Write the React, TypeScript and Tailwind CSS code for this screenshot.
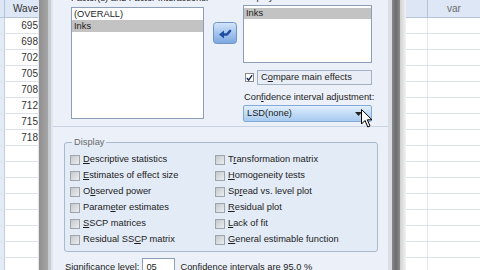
import React from 'react';

// mnemonic label: underline one character, like a Windows dialog
const Mn = ({ text, at }: { text: string; at: number }) => (
  <span className="whitespace-nowrap">
    {text.slice(0, at)}
    <span className="underline underline-offset-[1px]">{text.charAt(at)}</span>
    {text.slice(at + 1)}
  </span>
);

const Box = () => (
  <span className="w-[10px] h-[10px] shrink-0 border border-[#9ea4ab] bg-[linear-gradient(135deg,#c4c8cd,#eceef0)]" />
);

const leftRows = ['695', '698', '702', '705', '708', '712', '715', '718', '', '', '', '', '', '', '', ''];

const leftItems: [string, number][] = [
  ['Descriptive statistics', 0],
  ['Estimates of effect size', 0],
  ['Observed power', 1],
  ['Parameter estimates', 5],
  ['SSCP matrices', 0],
  ['Residual SSCP matrix', 11],
];
const rightItems: [string, number][] = [
  ['Transformation matrix', 1],
  ['Homogeneity tests', 0],
  ['Spread vs. level plot', 2],
  ['Residual plot', 0],
  ['Lack of fit', 0],
  ['General estimable function', 0],
];

export default function App() {
  return (
    <div className="relative w-[480px] h-[270px] overflow-hidden flex bg-white font-['Liberation_Sans',Arial,sans-serif] text-[9.3px] text-[#1c1c1c]">
      {/* data sheet on the left */}
      <div className="w-[38px] shrink-0 flex flex-col text-[10px] text-[#333]">
        <div className="h-[18px] shrink-0 flex border-b border-[#b4c3d8]">
          <div className="w-[5px] bg-[#dce6f4] border-r border-[#b4c3d8]" />
          <div className="flex-1 bg-[#dde7f5] pl-[8px] leading-[18px] overflow-hidden whitespace-nowrap">Wave</div>
        </div>
        {leftRows.map((v, i) => (
          <div key={i} className="h-[16px] shrink-0 flex border-b border-[#dde3ec]">
            <div className="w-[5px] bg-[#e3ebf6] border-r border-[#c4d0e0]" />
            <div className="flex-1 flex justify-end leading-[15px]">
              <span>{v}</span>
            </div>
          </div>
        ))}
      </div>

      {/* left window frame */}
      <div className="w-[15px] shrink-0 flex">
        <div className="w-[1px] bg-[#e2e4e8]" />
        <div className="w-[9px] bg-[linear-gradient(90deg,#8f8f8f,#a5a5a5)]" />
        <div className="w-[3px] bg-[#c8cbd0]" />
        <div className="w-[2px] bg-[#dfe6f0]" />
      </div>

      {/* dialog */}
      <div className="w-[335px] shrink-0 flex flex-col bg-[#ecf1f9] overflow-hidden">
        <div className="h-[127px] shrink-0 flex pl-[18px] border-b border-[#c9d3e2]">
          <div className="w-[133px] flex flex-col">
            <div className="-mt-[8px] h-[15px] leading-[12px] whitespace-nowrap">Factor(s) and Factor Interactions:</div>
            <div className="h-[112px] bg-white border border-[#8e9eb6]">
              <div className="h-[12px] leading-[12px] pl-[2px]">(OVERALL)</div>
              <div className="h-[12px] leading-[12px] pl-[2px] bg-[#c3c3c3]">Inks</div>
            </div>
          </div>

          <div className="ml-[9px] mt-[22px] w-[24px] h-[22px]">
            <svg width="24" height="22" viewBox="0 0 24 22">
              <defs>
                <linearGradient id="btn" x1="0" y1="0" x2="0" y2="1">
                  <stop offset="0" stopColor="#d4e5fb" />
                  <stop offset="1" stopColor="#7aa6df" />
                </linearGradient>
              </defs>
              <rect x="0.5" y="0.5" width="23" height="21" rx="3" fill="url(#btn)" stroke="#6f95c6" />
              <path d="M6 12.5 L11 8.5 L11 16.5 Z" fill="#1f4ea6" />
              <path d="M10 12.5 H14 L17 9" fill="none" stroke="#1f4ea6" strokeWidth="2.6" strokeLinecap="round" strokeLinejoin="round" />
            </svg>
          </div>

          <div className="ml-[6px] w-[129px] flex flex-col">
            <div className="-mt-[9px] h-[14px] leading-[12px] whitespace-nowrap">Display Means for:</div>
            <div className="h-[58px] bg-white border border-[#8e9eb6] pt-[2px]">
              <div className="h-[11px] leading-[11px] pl-[2px] bg-[#c3c3c3]">Inks</div>
            </div>
            <div className="mt-[7px] h-[15px] flex items-center">
              <span className="ml-[2px] w-[9px] h-[9px] shrink-0 bg-white border border-[#8a8a8a] flex items-center justify-center">
                <svg width="8" height="8" viewBox="0 0 8 8">
                  <path d="M1 4 L3 6.5 L7 0.8" fill="none" stroke="#1b2a55" strokeWidth="1.6" />
                </svg>
              </span>
              <div className="ml-[3px] flex-1 h-[15px] border border-[#a4b1c4] bg-[#e9eef6] pl-[3px] leading-[13px]">
                <Mn text="Compare main effects" at={1} />
              </div>
            </div>
            <div className="mt-[7px] h-[11px] leading-[11px] pl-[1px] whitespace-nowrap">
              <Mn text="Confidence interval adjustment:" at={3} />
            </div>
            <div className="mt-[2px] h-[17px] flex items-center justify-between rounded-[2px] border border-[#84a9d6] bg-[linear-gradient(180deg,#e3effc,#bcd8f5_60%,#a9cbf0)] pl-[3px]">
              <span>LSD(none)</span>
              <svg width="7" height="4" viewBox="0 0 7 4" className="mr-[9px]">
                <path d="M0 0 H7 L3.5 4 Z" fill="#222" />
              </svg>
            </div>
          </div>
        </div>

        {/* Display group */}
        <fieldset className="ml-[11px] mt-[10px] w-[314px] border border-[#aab8cc] rounded-[3px] bg-[#e3ebf6] px-[5px] pt-[4px] pb-[3px]">
          <legend className="ml-[2px] px-[2px] leading-[11px] text-[#6a6a6a]">Display</legend>
          <div className="grid grid-cols-[145px_1fr]">
            {leftItems.map((l, i) => (
              <React.Fragment key={i}>
                <div className="h-[16px] flex items-center">
                  <Box />
                  <span className="ml-[3px]"><Mn text={l[0]} at={l[1]} /></span>
                </div>
                <div className="h-[16px] flex items-center">
                  <Box />
                  <span className="ml-[3px]"><Mn text={rightItems[i][0]} at={rightItems[i][1]} /></span>
                </div>
              </React.Fragment>
            ))}
          </div>
        </fieldset>

        <div className="ml-[12px] mt-[6px] flex items-center">
          <span className="leading-[11px]"><Mn text="Significance level:" at={2} /></span>
          <div className="ml-[3px] w-[33px] h-[18px] bg-white border border-[#8e9eb6] pl-[3px] leading-[16px]">05</div>
          <span className="ml-[5px] leading-[11px] whitespace-nowrap">Confidence intervals are 95.0 %</span>
        </div>
      </div>

      {/* right window frame */}
      <div className="w-[18px] shrink-0 flex">
        <div className="w-[4px] bg-[#d9dee5]" />
        <div className="w-[8px] bg-[linear-gradient(90deg,#8a8a8a,#6c6c6c,#8c8c8c)]" />
        <div className="w-[6px] bg-[linear-gradient(90deg,#d0d0d0,#f2f2f2)]" />
      </div>

      {/* data sheet on the right */}
      <div className="flex-1 flex flex-col text-[10px]">
        <div className="h-[18px] shrink-0 flex border-b border-[#b4c3d8]">
          <div className="w-[22px] bg-[#dce6f4] border-r border-[#b4c3d8]" />
          <div className="flex-1 bg-[#dde7f5] text-center leading-[18px] text-[#6b6b6b]">var</div>
        </div>
        {leftRows.map((_, i) => (
          <div key={i} className="h-[16px] shrink-0 flex border-b border-[#dde3ec]">
            <div className="w-[22px] border-r border-[#e3e8ef]" />
            <div className="flex-1" />
          </div>
        ))}
      </div>

      {/* mouse pointer over the dropdown */}
      <svg className="absolute left-[361px] top-[109px]" width="12" height="19" viewBox="0 0 12 19">
        <path d="M0.5 0.5 V15 L4 11.5 L6.8 18 L9 17 L6.3 10.8 H11 Z" fill="#fff" stroke="#000" strokeWidth="1" strokeLinejoin="round" />
      </svg>
    </div>
  );
}
